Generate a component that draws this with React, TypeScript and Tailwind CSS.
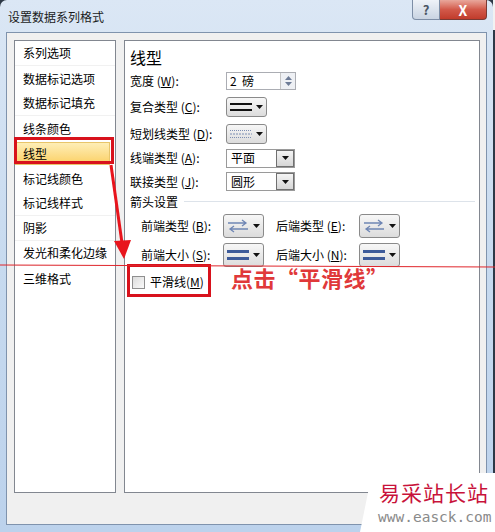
import React from "react";

const leftItems = [
  "系列选项",
  "数据标记选项",
  "数据标记填充",
  "线条颜色",
  "线型",
  "标记线颜色",
  "标记线样式",
  "阴影",
  "发光和柔化边缘",
  "三维格式",
];

// faint separators below these items
const sepAfter = [0, 2, 4, 6, 7, 8];

function Tri() {
  return (
    <svg width="7" height="4" viewBox="0 0 7 4">
      <path d="M0 0h7L3.5 4z" fill="#111" />
    </svg>
  );
}

function DropBtn({ children, tall }: { children: React.ReactNode; tall?: boolean }) {
  return (
    <div
      className={`w-[41px] ${tall ? "h-[24px]" : "h-[20px]"} rounded-[3px] border border-[#8a8a8a] bg-linear-to-b from-[#f7f7f7] to-[#dcdcdc] flex items-center pl-[3px] gap-[4px]`}
    >
      {children}
      <Tri />
    </div>
  );
}

function Select({ value }: { value: string }) {
  return (
    <div className="w-[69px] h-[19px] border border-[#9a9a9a] bg-white flex items-center justify-between pl-[4px]">
      <span>{value}</span>
      <div className="w-[18px] h-[17px] border border-[#707070] bg-linear-to-b from-[#f4f4f4] to-[#d6d6d6] flex items-center justify-center">
        <Tri />
      </div>
    </div>
  );
}

function Key({ k, tight }: { k: string; tight?: boolean }) {
  return (
    <>
      {tight ? "" : " "}(<span className="underline">{k}</span>){tight ? "" : ":"}
    </>
  );
}

const arrows = (
  <svg width="22" height="14" viewBox="0 0 22 14">
    <path d="M1 4h18M15 1l4 3-4 3" stroke="#6f86b4" strokeWidth="1.3" fill="none" />
    <path d="M3 10h18M7 7l-4 3 4 3" stroke="#6f86b4" strokeWidth="1.3" fill="none" />
  </svg>
);

const sizes = (
  <svg width="22" height="12" viewBox="0 0 22 12">
    <rect x="0" y="1" width="22" height="3" fill="#3d5b9a" />
    <rect x="0" y="8" width="22" height="3" fill="#3d5b9a" />
  </svg>
);

export default function App() {
  return (
    <div className="relative w-[495px] h-[532px] overflow-hidden bg-[#2d3947] text-[12px] text-black font-['Noto_Sans_CJK_SC','Noto_Sans',sans-serif] leading-none">
      {/* window */}
      <div className="w-[493px] h-[532px] rounded-t-[7px] bg-linear-to-b from-[#dbe7f5] via-[#c7daef] to-[#bcd2ec] flex flex-col">
        {/* title bar */}
        <div className="h-[32px] flex items-start relative">
          <span className="mt-[11px] ml-[8px] text-[12px] text-[#1b1b1b]">设置数据系列格式</span>
          <div className="ml-auto mr-[6px] flex">
            <div className="w-[28px] h-[20px] rounded-bl-[4px] border border-[#7d8ea6] border-t-0 bg-linear-to-b from-[#eef2f8] to-[#c9d4e2] flex items-center justify-center text-[13px] font-bold text-[#4a5564]">
              ?
            </div>
            <div className="w-[47px] h-[20px] rounded-br-[4px] border border-[#7a3a34] border-t-0 border-l-0 bg-linear-to-b from-[#e8a79c] via-[#d2594a] to-[#c13b2b] flex items-center justify-center text-[14px] font-bold text-white">
              X
            </div>
          </div>
        </div>

        {/* client area */}
        <div className="ml-[6px] w-[481px] h-[493px] border border-[#7f93ad] bg-[#f0f0f0] flex pl-[7px] pt-[7px] pr-[6px] gap-[8px]">
          {/* left list */}
          <div className="w-[102px] h-[453px] border border-[#828790] bg-white flex flex-col">
            {leftItems.map((t, i) =>
              i === 4 ? (
                <div key={t} className="h-[25px] flex items-center">
                  <div className="w-[95px] h-[23px] border border-[#e8c56a] bg-linear-to-b from-[#feeeb6] to-[#fbd062] flex items-center pl-[7px]">
                    {t}
                  </div>
                </div>
              ) : (
                <div
                  key={t}
                  className={`h-[25px] flex items-center pl-[8px] ${sepAfter.includes(i) ? "border-b border-[#f1f1f1]" : ""}`}
                >
                  {t}
                </div>
              )
            )}
          </div>

          {/* right panel */}
          <div className="w-[356px] h-[453px] border border-[#828790] bg-white flex flex-col pl-[5px] pt-[5px]">
            <div className="h-[22px] flex items-center text-[16px]">线型</div>

            <div className="h-[25px] flex items-center">
              <span className="w-[96px]">宽度<Key k="W" /></span>
              <div className="w-[70px] h-[18px] border border-[#abadb3] flex items-center justify-between pl-[3px]">
                <span className="whitespace-pre">2  磅</span>
                <div className="w-[15px] h-[16px] border-l border-[#c5c5c5] bg-[#eef0f4] flex flex-col items-center justify-center gap-[2px]">
                  <svg width="7" height="4" viewBox="0 0 7 4">
                    <path d="M0 4h7L3.5 0z" fill="#6d7b96" />
                  </svg>
                  <svg width="7" height="4" viewBox="0 0 7 4">
                    <path d="M0 0h7L3.5 4z" fill="#6d7b96" />
                  </svg>
                </div>
              </div>
            </div>

            <div className="h-[27px] flex items-center">
              <span className="w-[96px]">复合类型<Key k="C" /></span>
              <DropBtn>
                <svg width="22" height="10" viewBox="0 0 22 10">
                  <rect x="0" y="1" width="22" height="2" fill="#111" />
                  <rect x="0" y="7" width="22" height="2" fill="#111" />
                </svg>
              </DropBtn>
            </div>

            <div className="h-[27px] flex items-center">
              <span className="w-[96px]">短划线类型<Key k="D" /></span>
              <DropBtn>
                <svg width="22" height="10" viewBox="0 0 22 10">
                  <line x1="0" y1="1.5" x2="22" y2="1.5" stroke="#7d8fb3" strokeDasharray="1 1" />
                  <line x1="0" y1="5" x2="22" y2="5" stroke="#7d8fb3" strokeDasharray="2 1" />
                  <line x1="0" y1="8.5" x2="22" y2="8.5" stroke="#7d8fb3" strokeDasharray="1 1" />
                </svg>
              </DropBtn>
            </div>

            <div className="h-[22px] flex items-center">
              <span className="w-[96px]">线端类型<Key k="A" /></span>
              <Select value="平面" />
            </div>

            <div className="h-[25px] flex items-center">
              <span className="w-[96px]">联接类型<Key k="J" /></span>
              <Select value="圆形" />
            </div>

            <div className="h-[15px] flex items-center">
              <span>箭头设置</span>
              <div className="ml-[6px] mr-[4px] flex-1 h-px bg-[#dde3ea]" />
            </div>

            <div className="mt-[5px] h-[24px] flex items-center pl-[11px]">
              <span className="w-[82px]">前端类型<Key k="B" /></span>
              <DropBtn tall>{arrows}</DropBtn>
              <span className="ml-[12px] w-[83px]">后端类型<Key k="E" /></span>
              <DropBtn tall>{arrows}</DropBtn>
            </div>

            <div className="mt-[5px] h-[24px] flex items-center pl-[11px]">
              <span className="w-[82px]">前端大小<Key k="S" /></span>
              <DropBtn tall>{sizes}</DropBtn>
              <span className="ml-[12px] w-[83px]">后端大小<Key k="N" /></span>
              <DropBtn tall>{sizes}</DropBtn>
            </div>

            <div className="mt-[4px] h-[22px] flex items-center pl-[2px]">
              <div className="w-[13px] h-[13px] border border-[#8f8f8f] bg-linear-to-br from-[#dcdcdc] to-[#fafafa]" />
              <span className="ml-[5px]">平滑线<Key k="M" tight /></span>
            </div>
          </div>
        </div>
      </div>

      {/* top-right corner outside the window */}
      <div className="absolute top-0 right-0 w-[2px] h-[30px] bg-[#f2f2f2]" />

      {/* annotations */}
      <div className="absolute left-[14px] top-[137px] w-[100px] h-[27px] border-[3px] border-[#d8121c]" />
      <div className="absolute left-[127px] top-[264px] w-[84px] h-[33px] border-[3px] border-[#d8121c]" />
      <svg className="absolute left-0 top-0" width="495" height="532" viewBox="0 0 495 532">
        <line x1="0" y1="265" x2="495" y2="267" stroke="#e0252b" strokeWidth="1" />
        <line x1="111" y1="165" x2="122" y2="243" stroke="#e8141c" strokeWidth="3" />
        <path d="M114 241L131 240L124 259z" fill="#e8141c" />
      </svg>
      <div className="absolute left-[231px] top-[266px] text-[22px] font-bold text-[#e0393a] whitespace-nowrap tracking-[0.5px]">
        点击“平滑线”
      </div>

      {/* watermark */}
      <div className="absolute left-[360px] top-[473px] w-[135px] h-[59px] bg-white [clip-path:polygon(12px_0,100%_0,100%_100%,0_100%)]" />
      <div className="absolute left-[379px] top-[482px] text-[21px] text-[#c8123a] tracking-[1px] whitespace-nowrap">
        易采站长站
      </div>
      <div className="absolute left-[378px] top-[510px] text-[14.5px] text-[#8a8a8a] font-['DejaVu_Sans_Mono',monospace] whitespace-nowrap">
        www.easck.com
      </div>
    </div>
  );
}
